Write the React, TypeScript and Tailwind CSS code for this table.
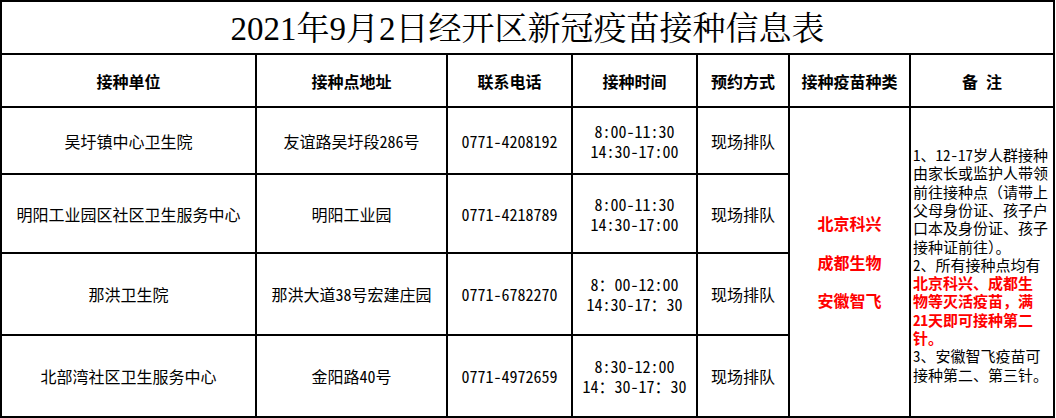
import React from "react";

type Row = {
  unit: string;
  addr: string;
  tel: string;
  time: [string, string];
  h: string;
};

const rows: Row[] = [
  { unit: "吴圩镇中心卫生院", addr: "友谊路吴圩段286号", tel: "0771-4208192", time: ["8:00-11:30", "14:30-17:00"], h: "h-[67px]" },
  { unit: "明阳工业园区社区卫生服务中心", addr: "明阳工业园", tel: "0771-4218789", time: ["8:00-11:30", "14:30-17:00"], h: "h-[79px]" },
  { unit: "那洪卫生院", addr: "那洪大道38号宏建庄园", tel: "0771-6782270", time: ["8：00-12:00", "14:30-17：30"], h: "h-[82px]" },
  { unit: "北部湾社区卫生服务中心", addr: "金阳路40号", tel: "0771-4972659", time: ["8:30-12:00", "14：30-17：30"], h: "h-[82px]" },
];

const cell = "border-2 border-black p-0 text-center align-middle";

// Render ASCII runs with half-width glyphs, keep CJK punctuation full width.
function Hw({ text }: { text: string }) {
  const parts = text.split(/([\x20-\x7e]+)/).filter((p) => p.length > 0);
  return (
    <>
      {parts.map((p, i) =>
        /^[\x20-\x7e]+$/.test(p) ? (
          <span key={i} className="inline-block whitespace-pre [font-feature-settings:'hwid']">
            {p}
          </span>
        ) : (
          <span key={i} className="inline-block">
            {p}
          </span>
        )
      )}
    </>
  );
}

const notes: { t: string; red?: boolean }[] = [
  { t: "1、12-17岁人群接种" },
  { t: "由家长或监护人带领" },
  { t: "前往接种点（请带上" },
  { t: "父母身份证、孩子户" },
  { t: "口本及身份证、孩子" },
  { t: "接种证前往）。" },
  { t: "2、所有接种点均有" },
  { t: "北京科兴、成都生", red: true },
  { t: "物等灭活疫苗，满", red: true },
  { t: "21天即可接种第二", red: true },
  { t: "针。", red: true },
  { t: "3、安徽智飞疫苗可" },
  { t: "接种第二、第三针。" },
];

export default function App() {
  return (
    <div className="w-[1056px] h-[418px] bg-white text-black font-['Noto_Sans_CJK_SC','Noto_Sans',sans-serif]">
      <table className="table-fixed border-collapse w-[1055px]">
        <colgroup>
          <col className="w-[255px]" />
          <col className="w-[191px]" />
          <col className="w-[125px]" />
          <col className="w-[125px]" />
          <col className="w-[92px]" />
          <col className="w-[121px]" />
          <col className="w-[144px]" />
        </colgroup>
        <tbody>
          <tr className="h-[53px]">
            <td
              colSpan={7}
              className={`${cell} text-[33px] leading-none pt-[4px] font-['Liberation_Serif','Noto_Serif_CJK_SC','Noto_Sans_CJK_SC',serif]`}
            >
              2021年9月2日经开区新冠疫苗接种信息表
            </td>
          </tr>
          <tr className="h-[53px] text-[16px] font-bold">
            <td className={cell}>接种单位</td>
            <td className={cell}>接种点地址</td>
            <td className={cell}>联系电话</td>
            <td className={cell}>接种时间</td>
            <td className={cell}>预约方式</td>
            <td className={cell}>接种疫苗种类</td>
            <td className={cell}>
              <span>备</span>
              <span className="inline-block w-[8px]" />
              <span>注</span>
            </td>
          </tr>
          {rows.map((r, i) => (
            <tr key={i} className={`${r.h} text-[16px]`}>
              <td className={`${cell} whitespace-nowrap`}>
                <Hw text={r.unit} />
              </td>
              <td className={`${cell} whitespace-nowrap`}>
                <Hw text={r.addr} />
              </td>
              <td className={cell}>
                <Hw text={r.tel} />
              </td>
              <td className={`${cell} leading-[20px] whitespace-nowrap`}>
                <div>
                  <Hw text={r.time[0]} />
                </div>
                <div>
                  <Hw text={r.time[1]} />
                </div>
              </td>
              <td className={cell}>现场排队</td>
              {i === 0 && (
                <>
                  <td rowSpan={4} className={`${cell} text-[16px] font-bold text-[#ff0000] leading-[38.5px]`}>
                    <div>北京科兴</div>
                    <div>成都生物</div>
                    <div>安徽智飞</div>
                  </td>
                  <td rowSpan={4} className={`${cell} text-left text-[15px] leading-[18.3px] pl-[2px] pt-[6px]`}>
                    {notes.map((n, k) => (
                      <div
                        key={k}
                        className={`whitespace-nowrap ${n.red ? "font-bold text-[#ff0000]" : ""}`}
                      >
                        <Hw text={n.t} />
                      </div>
                    ))}
                  </td>
                </>
              )}
            </tr>
          ))}
        </tbody>
      </table>
    </div>
  );
}
